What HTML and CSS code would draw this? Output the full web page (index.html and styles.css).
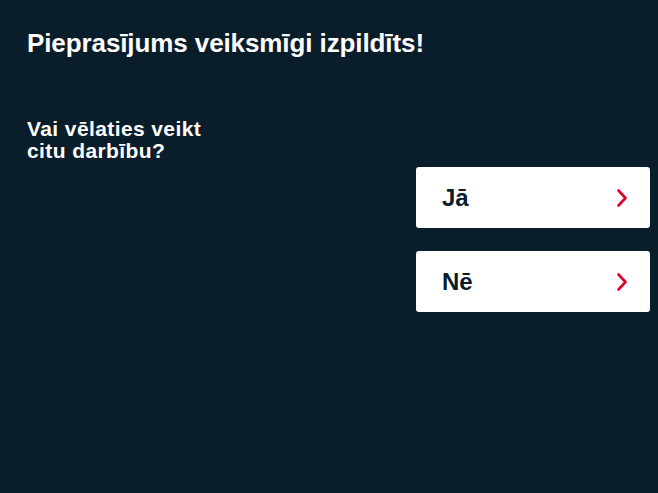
FILE: index.html
```html
<!DOCTYPE html>
<html lang="lv">
<head>
<meta charset="utf-8">
<link rel="stylesheet" href="styles.css">
</head>
<body>
<main class="screen">
  <h1 class="title">Pieprasījums veiksmīgi izpildīts!</h1>
  <div class="content">
    <p class="question">Vai vēlaties veikt<br>citu darbību?</p>
    <div class="options">
      <button class="option"><span>Jā</span>
        <svg class="chev" width="12" height="20" viewBox="0 0 12 20"><path d="M2.5 2.5 L9.5 10 L2.5 17.5" fill="none" stroke="#e4002b" stroke-width="2.6" stroke-linecap="round" stroke-linejoin="round"/></svg>
      </button>
      <button class="option"><span>Nē</span>
        <svg class="chev" width="12" height="20" viewBox="0 0 12 20"><path d="M2.5 2.5 L9.5 10 L2.5 17.5" fill="none" stroke="#e4002b" stroke-width="2.6" stroke-linecap="round" stroke-linejoin="round"/></svg>
      </button>
    </div>
  </div>
</main>
</body>
</html>
```
FILE: styles.css
```css
html, body {
  margin: 0;
  padding: 0;
  background: #0a1d2a;
}
.screen {
  width: 658px;
  height: 493px;
  box-sizing: border-box;
  padding: 28px 8px 0 27px;
  font-family: "Liberation Sans", Arial, sans-serif;
  color: #ffffff;
}
.title {
  margin: 0;
  font-size: 26px;
  font-weight: 700;
  line-height: 30px;
  letter-spacing: -0.1px;
}
.content {
  display: flex;
  justify-content: space-between;
  margin-top: 60px;
}
.question {
  margin: 0;
  font-size: 21px;
  font-weight: 700;
  line-height: 22px;
  letter-spacing: 0.4px;
}
.options {
  display: flex;
  flex-direction: column;
  gap: 23px;
  margin-top: 49px;
  width: 234px;
}
.option {
  display: flex;
  align-items: center;
  justify-content: space-between;
  height: 61px;
  padding: 0 22px 0 26px;
  border: none;
  border-radius: 3px;
  background: #ffffff;
  font-family: "Liberation Sans", Arial, sans-serif;
  font-size: 24px;
  font-weight: 700;
  color: #0a1d2a;
  cursor: pointer;
}
.chev {
  display: block;
}
```
